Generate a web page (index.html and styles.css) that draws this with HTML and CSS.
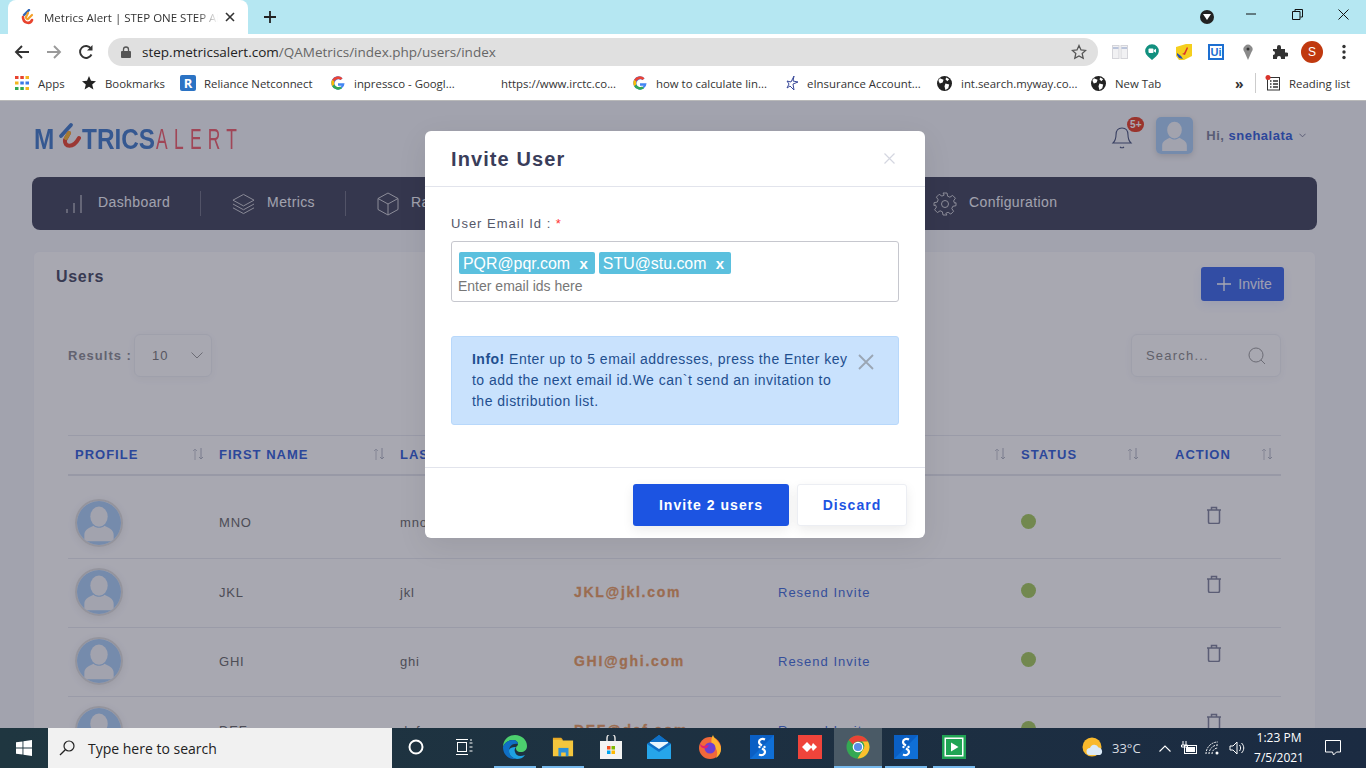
FILE: index.html
```html
<!DOCTYPE html>
<html lang="en">
<head>
    <meta charset="UTF-8">
    <title>Metrics Alert | Users</title>
    <link rel="stylesheet" href="styles.css">
</head>
<body>

<div class="tabstrip">
    <div class="tab">
        <svg class="tab-icon" viewBox="0 0 16 16" width="16" height="16"><path d="M9 1 4 6" stroke="#2f66b8" stroke-width="2.400" stroke-linecap="round" fill="none"/><path d="M3 8c0 6 7 8 9 3" stroke="#e8432e" stroke-width="2.600" stroke-linecap="round" fill="none"/><path d="M8 4 6 8c0 2 2 3 3 1l3-3" stroke="#f3a02a" stroke-width="2.200" stroke-linecap="round" fill="none"/></svg>
        <span class="tab-title">Metrics Alert | STEP ONE STEP AHEAD</span>
        <svg class="tab-close" viewBox="0 0 10 10" width="10" height="10"><path d="M1 1l8 8M9 1 1 9" stroke="#333" stroke-width="1.600"/></svg>
    </div>
    <svg class="new-tab" viewBox="0 0 12 12" width="12" height="12"><path d="M6 0v12M0 6h12" stroke="#222" stroke-width="1.800"/></svg>
    <div class="win-controls">
        <span class="win-profile"><svg viewBox="0 0 8 6" width="8" height="6"><path d="M0 0h8L4 6z" fill="#fff"/></svg></span>
        <span class="win-btn"><svg viewBox="0 0 10 10" width="10" height="10"><path d="M0 5h10" stroke="#111"/></svg></span>
        <span class="win-btn"><svg viewBox="0 0 11 11" width="11" height="11"><path d="M3 2.500V.5h7.500V8H8.500M.5 2.500h7.500v8H.5z" stroke="#111" fill="none"/></svg></span>
        <span class="win-btn"><svg viewBox="0 0 11 11" width="11" height="11"><path d="M.5.500l10 10M10.500.500l-10 10" stroke="#111"/></svg></span>
    </div>
</div>

<div class="toolbar">
    <span class="tool"><svg viewBox="0 0 16 16" width="16" height="16"><path d="M15 8H2M8 2 2 8l6 6" stroke="#333" stroke-width="1.900" fill="none"/></svg></span>
    <span class="tool"><svg viewBox="0 0 16 16" width="16" height="16"><path d="M1 8h13M8 2l6 6-6 6" stroke="#9a9a9a" stroke-width="1.900" fill="none"/></svg></span>
    <span class="tool"><svg viewBox="0 0 16 16" width="16" height="16"><path d="M13.500 10.500A6 6 0 1 1 13 4.500" stroke="#333" stroke-width="1.900" fill="none"/><path d="M14.500 1v5.500H9z" fill="#333"/></svg></span>
    <div class="address">
        <svg viewBox="0 0 10 12" width="10" height="12"><path d="M2.500 5V3.500a2.500 2.500 0 0 1 5 0V5" stroke="#555" stroke-width="1.300" fill="none"/><rect y="5" width="10" height="7" rx="1" fill="#555"/></svg>
        <span class="url"><b>step.metricsalert.com</b>/QAMetrics/index.php/users/index</span>
        <svg class="addr-star" viewBox="0 0 16 16" width="16" height="16"><path d="m8 1.500 2 4.400 4.700.5-3.500 3.200 1 4.700L8 11.900l-4.200 2.400 1-4.700-3.500-3.200L6 5.900z" stroke="#555" stroke-width="1.300" fill="none"/></svg>
    </div>
    <span class="tool"><svg viewBox="0 0 16 14" width="16" height="14"><rect x=".5" y=".5" width="6.500" height="13" fill="#f1f1f3" stroke="#d5d5da"/><rect x="9" y=".5" width="6.500" height="13" fill="#f1f1f3" stroke="#d5d5da"/><path d="M1 3h5.500M9.500 3H15" stroke="#a9b6d4" stroke-width="1.500"/></svg></span>
    <span class="tool"><svg viewBox="0 0 14 16" width="14" height="16"><path d="M7 16 3 12.500A6.800 6.800 0 1 1 11 12.500z" fill="#12907f"/><rect x="3.500" y="4.500" width="5" height="4.500" rx="1" fill="#fff"/><path d="m9 6 2-1.200v3.900L9 7.500z" fill="#fff"/></svg></span>
    <span class="tool"><svg viewBox="0 0 16 16" width="16" height="16"><path d="M0 3 10 0h6v12l-8 4H3L0 12z" fill="#f5cf1e"/><path d="M11 3 8 9l-2 1 3 1 3-7z" fill="#d9342b"/><path d="M1 9l4 3 2 3-4-1-2-3z" fill="#2a4fb0"/></svg></span>
    <span class="tool"><span class="ui-ext">Ui</span></span>
    <span class="tool"><svg viewBox="0 0 10 16" width="10" height="16"><path d="M5 16 1.500 8A4.500 4.500 0 1 1 8.500 8z" fill="#8a8a8a"/><circle cx="5" cy="5" r="1.500" fill="#333"/></svg></span>
    <span class="tool"><svg viewBox="0 0 16 16" width="16" height="16"><path d="M1 5h4V3a2 2 0 0 1 4 0v2h4v3.500h1.500a2 2 0 0 1 0 4H13V15H9v-1a2 2 0 0 0-4 0v1H1v-4a2 2 0 0 0 0-4z" fill="#333"/></svg></span>
    <span class="tool"><span class="chrome-user">S</span></span>
    <span class="tool"><svg viewBox="0 0 4 16" width="4" height="16"><circle cx="2" cy="2.500" r="1.700" fill="#333"/><circle cx="2" cy="8" r="1.700" fill="#333"/><circle cx="2" cy="13.500" r="1.700" fill="#333"/></svg></span>
</div>

<div class="bookmarks">
    <span class="bm"><svg viewBox="0 0 14 14" width="14" height="14"><path d="M0 1.500h3.500M5.300 1.500h3.500" stroke="#e8432e" stroke-width="3"/><path d="M10.500 1.500H14M0 7h3.500" stroke="#f3b51f" stroke-width="3"/><path d="M5.300 7h3.500M10.500 7H14" stroke="#3b78e7" stroke-width="3"/><path d="M0 12.500h3.500M5.300 12.500h3.500" stroke="#31a853" stroke-width="3"/><path d="M10.500 12.500H14" stroke="#f3b51f" stroke-width="3"/></svg>Apps</span>
    <span class="bm"><svg viewBox="0 0 14 14" width="14" height="14"><path d="m7 0 2 4.800 5 .4-3.800 3.300 1.200 5L7 10.800l-4.400 2.700 1.200-5L0 5.200l5-.4z" fill="#222"/></svg>Bookmarks</span>
    <span class="bm"><span class="bm-r">R</span>Reliance Netconnect</span>
    <span class="bm"><svg viewBox="0 0 16 16" width="14" height="14"><use href="#google"/></svg>inpressco - Googl...</span>
    <span class="bm bm-plain">https://www.irctc.co...</span>
    <span class="bm"><svg viewBox="0 0 16 16" width="14" height="14"><use href="#google"/></svg>how to calculate lin...</span>
    <span class="bm bm-tight"><svg viewBox="0 0 16 16" width="16" height="16"><path d="m9 1-1 5 5 1-5 2 1 6-4-4-3 2 2-4-2-3 4 1z" stroke="#3a4a9a" fill="none"/></svg>eInsurance Account...</span>
    <span class="bm"><svg viewBox="0 0 16 16" width="15" height="15"><use href="#globe"/></svg>int.search.myway.co...</span>
    <span class="bm"><svg viewBox="0 0 16 16" width="15" height="15"><use href="#globe"/></svg>New Tab</span>
    <span class="bm-more">»</span>
    <span class="bm-reading">
        <svg viewBox="0 0 16 16" width="16" height="16"><rect x="2.500" y="2.500" width="12" height="12.500" fill="none" stroke="#333"/><path d="M5 6h1.500M8 6h5M5 9h1.500M8 9h5M5 12h1.500M8 12h5" stroke="#333" stroke-width="1.300"/><circle cx="3" cy="2.500" r="2.500" fill="#d9342b"/></svg>
        Reading list
    </span>
</div>

<svg class="defs" width="0" height="0">
    <defs>
        <g id="google"><path d="M15.500 8.200H8v3h4.300A4.500 4.500 0 1 1 11 4.700l2.200-2.200A7.600 7.600 0 1 0 15.500 8.200z" fill="#4285f4"/><path d="M1.300 4.400 3.900 6.300A4.500 4.500 0 0 1 11 4.700l2.200-2.200A7.600 7.600 0 0 0 1.300 4.400z" fill="#ea4335"/><path d="M1.300 4.400a7.600 7.600 0 0 0 0 7.200l2.600-2a4.500 4.500 0 0 1 0-3.300z" fill="#fbbc05"/><path d="M1.300 11.600a7.600 7.600 0 0 0 11.400 2.400L10.300 12a4.500 4.500 0 0 1-6.400-2.400z" fill="#34a853"/></g>
        <g id="globe"><circle cx="8" cy="8" r="8" fill="#222"/><path d="M3 2.500 7 4 6 7 3 8 1.500 5zM9 8l4 1-1 4-3 2-1-4zM10 1.500l3 2-2 2-2-2z" fill="#fff"/></g>
        <g id="person"><rect width="48" height="48" fill="#a9cdf6"/><ellipse cx="24" cy="17" rx="9.500" ry="11" fill="#f4f5f8"/><path d="M8 44V37c0-6 6-8 10-10 3 3 9 3 12 0 4 2 10 4 10 10v7z" fill="#f4f5f8"/></g>
        <g id="sort"><path d="M3 12V1M1 3l2-2 2 2" stroke="#c4c7d0" fill="none"/><path d="M9 0v11M7 9l2 2 2-2" stroke="#b0b4c0" fill="none"/></g>
        <g id="trash"><path d="M1 4h14M5.500 4V1.500h5V4M2.500 4v12a1.500 1.500 0 0 0 1.500 1.500h8a1.500 1.500 0 0 0 1.500-1.500V4" stroke="#7d8199" stroke-width="1.500" fill="none"/></g>
        <g id="snap"><rect width="24" height="24" fill="#0f6fd6"/><path d="M0 0h24L0 24z" fill="#0a5fc4"/><path d="M15 4.500c-3-1.500-6 0-6 2.500 0 2 2 3 3 3.500M9 19.500c3 1.500 6 0 6-2.500 0-2-2-3-3-3.500" stroke="#fff" stroke-width="2.200" fill="none"/><circle cx="9.500" cy="12" r="1.200" fill="#fff"/><circle cx="14.500" cy="12" r="1.200" fill="#fff"/></g>
    </defs>
</svg>

<div class="page">
    <header class="site-head">
        <div class="logo">
            <span class="logo-m">M</span><svg class="logo-mark" viewBox="0 0 24 28" width="24" height="28"><path d="M14 3 4 14" stroke="#3f78c8" stroke-width="3.800" stroke-linecap="round" fill="none"/><path d="M12 11 8 18c-1 7 8 9 14-2" stroke="#e8432e" stroke-width="4" stroke-linecap="round" fill="none"/><path d="M12 11 9 16" stroke="#f7b32b" stroke-width="4" stroke-linecap="round" fill="none"/></svg><span class="logo-trics">TRICS</span><span class="logo-light">ALERT</span>
        </div>
        <div class="user-box">
            <span class="bell">
                <svg viewBox="0 0 24 26" width="24" height="26"><path d="M12 5c-4 0-6 3-6 7 0 4-1 6-3 8h18c-2-2-3-4-3-8 0-4-2-7-6-7zM10 24c1 1 3 1 4 0" stroke="#44507a" stroke-width="1.100" fill="none"/></svg>
                <span class="badge">5+</span>
            </span>
            <svg class="top-avatar" viewBox="0 0 48 48" width="37" height="37"><use href="#person"/></svg>
            <span class="hi">Hi, <b>snehalata</b></span>
            <svg viewBox="0 0 8 5" width="7" height="5"><path d="m.5.500 3.500 3.500L7.500.500" stroke="#6d7491" fill="none"/></svg>
        </div>
    </header>

    <nav class="main-nav">
        <a class="nav-item">
            <svg viewBox="0 0 20 20" width="20" height="20"><path d="M1 19v-4M8 19V9M15 19V1" stroke="#fff" stroke-width="1.100" fill="none"/></svg>
            Dashboard
        </a>
        <a class="nav-item">
            <svg viewBox="0 0 24 24" width="23" height="24"><path d="m12 2 11 6-11 6L1 8zM1 12l11 6 11-6M1 16l11 6 11-6" stroke="#fff" stroke-width="1" fill="none"/></svg>
            Metrics
        </a>
        <a class="nav-item">
            <svg viewBox="0 0 22 24" width="22" height="24"><path d="m11 1 10 5.500v11L11 23 1 17.500v-11zM1 6.500 11 12l10-5.500M11 12v11" stroke="#fff" stroke-width="1" fill="none"/></svg>
            Raw Data
        </a>
        <a class="nav-item nav-item-last">
            <svg viewBox="0 0 24 24" width="24" height="24"><circle cx="12" cy="12" r="3.500" stroke="#fff" fill="none"/><path d="M10 1h4l.6 3.200 2.300 1 2.700-1.800 2.800 2.800-1.800 2.700 1 2.300L23 10.700v3l-3.200.6-1 2.300 1.800 2.700-2.800 2.800-2.700-1.800-2.300 1L14 23h-4l-.6-3.200-2.300-1-2.700 1.800-2.800-2.800 1.800-2.700-1-2.300L1 13.700v-3l3.200-.6 1-2.300-1.800-2.700 2.800-2.800 2.700 1.800 2.300-1z" stroke="#fff" stroke-width="1" fill="none"/></svg>
            Configuration
        </a>
    </nav>

    <section class="card">
        <div class="card-head">
            <h2>Users</h2>
            <button class="invite-btn"><svg viewBox="0 0 14 14" width="14" height="14"><path d="M7 0v14M0 7h14" stroke="#fff" stroke-width="1.300"/></svg>Invite</button>
        </div>

        <div class="controls">
            <label class="results">Results :
                <span class="select">10<svg viewBox="0 0 12 7" width="12" height="7"><path d="m.5.500 5.500 5.500L11.500.500" stroke="#999" fill="none"/></svg></span>
            </label>
            <div class="search">Search...<svg viewBox="0 0 18 18" width="18" height="18"><circle cx="8" cy="8" r="7" stroke="#999" fill="none"/><path d="m13 13 4 4" stroke="#999"/></svg></div>
        </div>

        <table class="users">
            <colgroup>
                <col class="c1"><col class="c2"><col class="c3"><col class="c4"><col class="c5"><col class="c6"><col class="c7">
            </colgroup>
            <thead>
                <tr>
                    <th>PROFILE<svg class="sort" viewBox="0 0 12 12" width="12" height="12"><use href="#sort"/></svg></th>
                    <th>FIRST NAME<svg class="sort" viewBox="0 0 12 12" width="12" height="12"><use href="#sort"/></svg></th>
                    <th>LAST NAME<svg class="sort" viewBox="0 0 12 12" width="12" height="12"><use href="#sort"/></svg></th>
                    <th>EMAIL<svg class="sort" viewBox="0 0 12 12" width="12" height="12"><use href="#sort"/></svg></th>
                    <th>INVITE<svg class="sort" viewBox="0 0 12 12" width="12" height="12"><use href="#sort"/></svg></th>
                    <th>STATUS<svg class="sort" viewBox="0 0 12 12" width="12" height="12"><use href="#sort"/></svg></th>
                    <th class="th-action">ACTION<svg class="sort" viewBox="0 0 12 12" width="12" height="12"><use href="#sort"/></svg></th>
                </tr>
            </thead>
            <tbody>
                <tr class="gap"><td colspan="7"></td></tr>
                <tr>
                    <td><svg class="avatar" viewBox="0 0 48 48" width="48" height="48"><use href="#person"/></svg></td>
                    <td>MNO</td><td>mno</td><td class="email">MNO@mno.com</td><td class="resend">Resend Invite</td>
                    <td><span class="dot"></span></td>
                    <td class="action"><svg viewBox="0 0 16 18" width="16" height="18"><use href="#trash"/></svg></td>
                </tr>
                <tr>
                    <td><svg class="avatar" viewBox="0 0 48 48" width="48" height="48"><use href="#person"/></svg></td>
                    <td>JKL</td><td>jkl</td><td class="email">JKL@jkl.com</td><td class="resend">Resend Invite</td>
                    <td><span class="dot"></span></td>
                    <td class="action"><svg viewBox="0 0 16 18" width="16" height="18"><use href="#trash"/></svg></td>
                </tr>
                <tr>
                    <td><svg class="avatar" viewBox="0 0 48 48" width="48" height="48"><use href="#person"/></svg></td>
                    <td>GHI</td><td>ghi</td><td class="email">GHI@ghi.com</td><td class="resend">Resend Invite</td>
                    <td><span class="dot"></span></td>
                    <td class="action"><svg viewBox="0 0 16 18" width="16" height="18"><use href="#trash"/></svg></td>
                </tr>
                <tr>
                    <td><svg class="avatar" viewBox="0 0 48 48" width="48" height="48"><use href="#person"/></svg></td>
                    <td>DEF</td><td>def</td><td class="email">DEF@def.com</td><td class="resend">Resend Invite</td>
                    <td><span class="dot"></span></td>
                    <td class="action"><svg viewBox="0 0 16 18" width="16" height="18"><use href="#trash"/></svg></td>
                </tr>
            </tbody>
        </table>
    </section>

    <div class="backdrop"></div>

    <div class="modal">
        <div class="modal-head">
            <h3>Invite User</h3>
            <svg viewBox="0 0 11 11" width="11" height="11"><path d="m.5.500 10 10M10.500.500l-10 10" stroke="#d4d6e0" stroke-width="1.200"/></svg>
        </div>
        <div class="modal-body">
            <label class="field-label">User Email Id : <span class="req">*</span></label>
            <div class="tag-input">
                <div class="tags">
                    <span class="tag">PQR@pqr.com <i>x</i></span>
                    <span class="tag">STU@stu.com <i>x</i></span>
                </div>
                <div class="placeholder">Enter email ids here</div>
            </div>
            <div class="alert">
                <p><b>Info!</b> Enter up to 5 email addresses, press the Enter key to add the next email id.We can`t send an invitation to the distribution list.</p>
                <svg viewBox="0 0 16 16" width="16" height="16"><path d="m1 1 14 14M15 1 1 15" stroke="#9aa6b4" stroke-width="1.800"/></svg>
            </div>
        </div>
        <div class="modal-foot">
            <button class="btn-primary">Invite 2 users</button>
            <button class="btn-light">Discard</button>
        </div>
    </div>
</div>

<footer class="taskbar">
    <span class="start"><svg viewBox="0 0 16 16" width="16" height="16"><path d="M0 2.300 6.500 1.400v6.100H0zM7.400 1.300 16 0v7.500H7.400zM0 8.500h6.500v6.100L0 13.700zM7.400 8.500H16V16l-8.600-1.300z" fill="#fff"/></svg></span>
    <div class="task-search">
        <svg viewBox="0 0 16 16" width="16" height="16"><circle cx="10" cy="6" r="5" stroke="#222" fill="none" stroke-width="1.200"/><path d="M6.300 9.700 1 15" stroke="#222" stroke-width="1.300"/></svg>
        Type here to search
    </div>
    <span class="task"><svg viewBox="0 0 16 16" width="16" height="16"><circle cx="8" cy="8" r="6.500" stroke="#fff" stroke-width="2" fill="none"/></svg></span>
    <span class="task"><svg viewBox="0 0 18 16" width="18" height="16"><rect x="2.500" y="3.500" width="9" height="9" stroke="#fff" fill="none"/><path d="M1 .500h12M1 15.500h12M14.500 4h3M14.500 8h3M14.500 12h3M15 1h2" stroke="#fff"/></svg></span>
    <span class="task task-open task-edge"><svg viewBox="0 0 24 24" width="24" height="24"><path d="M12 0c7 0 12 5 12 11 0 4-3 6-6 6-4 0-5-2-5-4 0-2 2-2 2-4 0-2-2-4-5-4C5 5 1 8 0 12 0 5 5 0 12 0z" fill="#4ccf6e"/><path d="M0 12c1-4 5-7 10-7 3 0 5 2 5 4-6-1-9 3-9 7 0 4 3 7 8 8C6 25 0 20 0 12z" fill="#0f6fc5"/><path d="M6 16c0 4 3 7 8 8 3 0 6-1 8-4-5 2-9 1-10-3-1-2 0-4 1-5-4 0-7 1-7 4z" fill="#1ea2e3"/></svg></span>
    <span class="task task-open"><svg viewBox="0 0 24 24" width="24" height="22"><path d="M1 3h9l2 2h11v17H1z" fill="#f4c63d"/><path d="M1 2h9l2 2H1z" fill="#e8a825"/><rect x="7" y="13" width="11" height="9" fill="#2a8fd8"/><rect x="10" y="18" width="5" height="4" fill="#f4c63d"/></svg></span>
    <span class="task"><svg viewBox="0 0 22 24" width="22" height="24"><path d="M7 6V3a4 4 0 0 1 8 0v3" stroke="#ddd" fill="none" stroke-width="1.500"/><rect y="6" width="22" height="18" fill="#f3f3f3"/><path d="M7 11h3.500v3.500H7z" fill="#f25022"/><path d="M11.500 11H15v3.500h-3.500z" fill="#7fba00"/><path d="M7 15.500h3.500V19H7z" fill="#00a4ef"/><path d="M11.500 15.500H15V19h-3.500z" fill="#ffb900"/></svg></span>
    <span class="task"><svg viewBox="0 0 24 24" width="24" height="24"><path d="M12 0 24 9v15H0V9z" fill="#0f80d0"/><path d="M0 9h24v15H0z" fill="#26a5ea"/><path d="m0 9 12 8 12-8-12-9z" fill="#0f6fc5"/><path d="m3 8 9 6 9-6v-1H3z" fill="#eaf6fd"/></svg></span>
    <span class="task task-fox"><svg viewBox="0 0 24 24" width="24" height="24"><circle cx="12" cy="13" r="11" fill="#f0683a"/><path d="M15 0c1 4 8 7 8 14 0 4-2 7-5 9 3-6 0-11-4-13-1-4-1-7 1-10z" fill="#ffb52e"/><circle cx="12" cy="13" r="5.500" fill="#6d3fd1"/><path d="M2 8c2 5 6 2 9 2l-2 3c-3 1-7 0-7-5z" fill="#e2226f"/></svg></span>
    <span class="task task-gap"><svg viewBox="0 0 24 24" width="24" height="24"><use href="#snap"/></svg></span>
    <span class="task"><svg viewBox="0 0 24 24" width="24" height="24"><rect width="24" height="24" fill="#ef443b"/><path d="m9 7 5 5-5 5-5-5zM15 8l4 4-4 4-2-4z" fill="#fff"/></svg></span>
    <span class="task task-active task-open"><svg viewBox="0 0 24 24" width="24" height="24"><circle cx="12" cy="12" r="11.500" fill="#34a853"/><path d="M12 .500A11.500 11.500 0 0 1 22 6.500H12a5.500 5.500 0 0 0-5 3L2.800 5A11.500 11.500 0 0 1 12 .500z" fill="#ea4335"/><path d="M22 6.500a11.500 11.500 0 0 1-10.500 17L16.700 15A5.500 5.500 0 0 0 16 6.500z" fill="#fbc02d"/><circle cx="12" cy="12" r="5.300" fill="#fff"/><circle cx="12" cy="12" r="4.100" fill="#5a8ee8"/></svg></span>
    <span class="task task-open"><svg viewBox="0 0 24 24" width="24" height="24"><use href="#snap"/></svg></span>
    <span class="task task-open"><svg viewBox="0 0 24 24" width="24" height="24"><rect width="24" height="24" fill="#20a454"/><rect x="2.500" y="2.500" width="19" height="19" fill="#fff"/><rect x="4" y="4" width="16" height="16" fill="#20a454"/><path d="M9 7.500 16.500 12 9 16.500z" fill="#fff"/></svg></span>

    <div class="tray">
        <span class="tray-weather"><svg viewBox="0 0 22 22" width="22" height="22"><circle cx="10" cy="10" r="9.500" fill="#f9b92c"/><path d="M8 18a3.500 3.500 0 0 1 0-7 4.500 4.500 0 0 1 8.500-.5A4 4 0 0 1 18 18z" fill="#dbeaf7"/></svg></span>
        <span class="tray-temp">33°C</span>
        <span class="tray-icon"><svg viewBox="0 0 12 7" width="12" height="7"><path d="m.5 6.500 5.500-5.500 5.500 5.500" stroke="#fff" fill="none" stroke-width="1.100"/></svg></span>
        <span class="tray-icon"><svg viewBox="0 0 16 14" width="16" height="14"><rect x="3.500" y="4.500" width="12" height="8" stroke="#fff" fill="none"/><rect x="5" y="6" width="9" height="5" fill="#fff"/><path d="M2 0v4M5 0v4M.5 4h6v2H.5z" stroke="#fff" fill="none"/></svg></span>
        <span class="tray-icon"><svg viewBox="0 0 16 14" width="16" height="14"><path d="M1 13A12 12 0 0 1 13 1M4 13a9 9 0 0 1 9-9M7 13a6 6 0 0 1 6-6" stroke="#fff" fill="none" stroke-dasharray="2 1"/><circle cx="12" cy="12" r="1.500" fill="#fff"/></svg></span>
        <span class="tray-icon"><svg viewBox="0 0 16 16" width="16" height="16"><path d="M1 6h3l4-4v12l-4-4H1zM10.500 5c1.500 2 1.500 4 0 6M12.500 3c3 3 3 7 0 10" stroke="#fff" fill="none"/></svg></span>
        <span class="clock">1:23 PM<br>7/5/2021</span>
        <span class="tray-notify"><svg viewBox="0 0 16 16" width="16" height="16"><path d="M.5.500h15v11.500h-4l-3 3-1-3H.5z" stroke="#fff" fill="none"/></svg></span>
    </div>
</footer>

</body>
</html>
```

FILE: styles.css
```css
* {
    box-sizing: border-box;
}
html, body {
    height: 100%;
}
body {
    font-family: "Liberation Sans", Arial, sans-serif;
    margin: 0;
    height: 768px;
    display: flex;
    flex-direction: column;
    overflow: hidden;
    background-color: #f4f5f8;
}
svg {
    flex-shrink: 0;
    display: block;
}
.defs {
    position: absolute;
}

/* browser chrome */
.tabstrip {
    height: 34px;
    background-color: #b5e7f2;
    display: flex;
    align-items: center;
    padding-left: 8px;
}
.tab {
    width: 240px;
    height: 34px;
    background-color: #fff;
    border-radius: 8px 8px 0 0;
    display: flex;
    align-items: center;
    padding-left: 12px;
}
.tab-title {
    font-family: "Open Sans", sans-serif;
    font-size: 11.500px;
    color: #333;
    width: 174px;
    margin-left: 8px;
    white-space: nowrap;
    overflow: hidden;
    -webkit-mask-image: linear-gradient(90deg, #000 88%, transparent);
    mask-image: linear-gradient(90deg, #000 88%, transparent);
}
.tab-close {
    margin-left: 7px;
}
.new-tab {
    margin-left: 16px;
}
.win-controls {
    margin-left: auto;
    display: flex;
    align-items: center;
    height: 100%;
}
.win-profile {
    width: 14px;
    height: 14px;
    border-radius: 50%;
    background-color: #222;
    display: flex;
    align-items: center;
    justify-content: center;
    margin-right: 14px;
}
.win-btn {
    width: 46px;
    display: flex;
    justify-content: center;
    margin-top: -6px;
}
.toolbar {
    height: 34px;
    padding: 2px 0 0 6px;
    background-color: #fff;
    display: flex;
    align-items: center;
}
.tool {
    width: 32px;
    height: 28px;
    display: flex;
    align-items: center;
    justify-content: center;
}
.address {
    width: 990px;
    height: 28px;
    margin: 0 6px;
    background-color: #e0e0e0;
    border-radius: 14px;
    display: flex;
    align-items: center;
    padding-left: 13px;
}
.url {
    font-family: "Open Sans", sans-serif;
    font-size: 13.500px;
    color: #666;
    margin-left: 11px;
}
.url b {
    font-weight: normal;
    color: #222;
}
.addr-star {
    margin-left: auto;
    margin-right: 11px;
}
.ui-ext {
    width: 16px;
    height: 16px;
    border: 2px solid #1d6fd1;
    color: #1d6fd1;
    font-size: 11px;
    font-weight: bold;
    line-height: 12px;
    text-align: center;
}
.chrome-user {
    width: 22px;
    height: 22px;
    border-radius: 50%;
    background-color: #c0390f;
    color: #fff;
    font-size: 12px;
    line-height: 22px;
    text-align: center;
}
.bookmarks {
    height: 33px;
    flex-shrink: 0;
    padding: 0 0 2px 15px;
    background-color: #fff;
    border-bottom: 1px solid #b9b9b9;
    display: grid;
    grid-template-columns: 67px 98px 151px 148px 154px 152px 152px 154px 144px 20px 1fr;
    align-items: center;
    font-family: "Open Sans", sans-serif;
    font-size: 11.400px;
    color: #333;
}
.bm {
    display: flex;
    align-items: center;
    gap: 9px;
    white-space: nowrap;
}
.bm-tight {
    gap: 6px;
}
.bm-plain {
    padding-left: 22px;
}
.bm-r {
    width: 16px;
    height: 16px;
    background-color: #2b73c4;
    border-radius: 2px;
    color: #fff;
    font-weight: bold;
    font-size: 13px;
    line-height: 16px;
    text-align: center;
    margin-right: -1px;
}
.bm-more {
    font-size: 14px;
    font-weight: bold;
}
.bm-reading {
    display: flex;
    align-items: center;
    gap: 8px;
    border-left: 1px solid #ccc;
    padding-left: 9px;
    height: 20px;
}

/* site */
.page {
    flex: 1;
    position: relative;
    overflow: hidden;
    padding: 0 49px 0 32px;
    min-height: 0;
}
.backdrop {
    position: absolute;
    inset: 0;
    background-color: rgba(40, 40, 62, .4);
}
.site-head {
    height: 76px;
    display: flex;
    align-items: center;
    justify-content: space-between;
    padding: 0 11px 0 2px;
}
.logo {
    display: flex;
    align-items: center;
    font-size: 29px;
    line-height: 30px;
    margin-top: -1px;
}
.logo-m,
.logo-trics {
    display: inline-block;
    color: #3f78c8;
    font-weight: bold;
    transform: scaleX(.84);
    transform-origin: left;
}
.logo-m {
    margin-right: -1px;
}
.logo-mark {
    margin: -6px 1px 0 0;
}
.logo-trics {
    margin-right: -16px;
}
.logo-light {
    display: inline-block;
    color: #f05a68;
    letter-spacing: 10.500px;
    margin-left: 3px;
    transform: scaleX(.6);
    transform-origin: left;
}
.user-box {
    align-self: flex-start;
    display: flex;
    align-items: center;
    margin-top: 16px;
}
.bell {
    position: relative;
    margin-right: 22px;
}
.badge {
    position: absolute;
    top: -6px;
    right: -10px;
    width: 17px;
    height: 15px;
    border-radius: 8px;
    background-color: #e63d22;
    color: #fff;
    font-size: 10px;
    font-weight: bold;
    line-height: 15px;
    text-align: center;
}
.top-avatar {
    border-radius: 5px;
    box-shadow: 0 2px 6px rgba(0, 0, 0, .15);
}
.hi {
    font-size: 13px;
    font-weight: bold;
    letter-spacing: .5px;
    color: #7b8099;
    margin: 0 6px 0 13px;
}
.hi b {
    color: #2f5cd8;
}
.main-nav {
    height: 53px;
    background-color: #3f4259;
    border-radius: 8px;
    display: flex;
    align-items: center;
    padding-left: 34px;
}
.nav-item {
    display: flex;
    align-items: center;
    gap: 12px;
    height: 25px;
    padding: 0 30px 4px 0;
    margin-right: 31px;
    border-right: 1px solid rgba(255, 255, 255, .25);
    color: #f2f3f8;
    font-size: 14px;
    letter-spacing: .4px;
}
.nav-item svg {
    opacity: .75;
    margin-top: 4px;
}
.nav-item-last {
    margin: 0 0 0 auto;
    width: 384px;
    border-right: 0;
}
.card {
    margin: 21px 1px 0;
    height: 600px;
    background-color: #fdfdfe;
    border: 1px solid #f2f3f8;
    border-radius: 6px;
    padding: 15px 31px 0 22px;
}
.card-head {
    display: flex;
    justify-content: space-between;
    align-items: flex-start;
}
.card-head h2 {
    margin: 0;
    font-size: 16px;
    letter-spacing: .7px;
    color: #44475f;
    line-height: 20px;
}
.invite-btn {
    width: 83px;
    height: 34px;
    padding: 0 0 0 4px;
    background-color: #3a67e8;
    border: 0;
    border-radius: 3px;
    color: #eef;
    font-family: inherit;
    font-size: 14px;
    display: flex;
    align-items: center;
    justify-content: center;
    gap: 7px;
    box-shadow: 0 4px 10px rgba(58, 103, 232, .1);
}
.controls {
    margin: 33px 3px 0 12px;
    display: flex;
    justify-content: space-between;
}
.results {
    display: flex;
    align-items: center;
    font-size: 13px;
    font-weight: bold;
    letter-spacing: 1px;
    color: #8a8a92;
}
.select {
    width: 78px;
    height: 43px;
    margin-left: 2px;
    border: 1px solid #eef0f4;
    border-radius: 6px;
    display: flex;
    align-items: center;
    justify-content: space-between;
    padding: 0 8px 0 17px;
    font-weight: normal;
    color: #777;
    box-shadow: 0 2px 8px rgba(0, 0, 0, .04);
}
.search {
    width: 150px;
    height: 43px;
    border: 1px solid #eef0f4;
    border-radius: 6px;
    display: flex;
    align-items: center;
    justify-content: space-between;
    padding: 0 14px;
    font-size: 13px;
    letter-spacing: 1.200px;
    color: #888;
    box-shadow: 0 2px 8px rgba(0, 0, 0, .04);
}
.users {
    margin: 58px 3px 0 12px;
    width: 1213px;
    table-layout: fixed;
    border-collapse: collapse;
}
.c1 { width: 144px; }
.c2 { width: 181px; }
.c3 { width: 174px; }
.c4 { width: 204px; }
.c5 { width: 243px; }
.c6 { width: 133px; }
.c7 { width: 134px; }
.users th {
    position: relative;
    height: 39px;
    padding: 0 7px;
    border-top: 1px solid #e6e8ef;
    border-bottom: 2px solid #e3e5ec;
    text-align: left;
    color: #2f5cd8;
    font-size: 13px;
    letter-spacing: 1px;
}
.users .th-action {
    padding-left: 28px;
}
.sort {
    position: absolute;
    right: 8px;
    top: 12px;
}
.users td {
    height: 69px;
    padding: 0 7px 2px;
    border-bottom: 1px solid #e6e8ef;
    font-size: 13px;
    letter-spacing: .8px;
    color: #666;
}
.users .gap td {
    height: 15px;
    padding: 0;
    border: 0;
}
.avatar {
    border-radius: 50%;
    border: 2px solid #ddd;
    box-shadow: 0 2px 8px rgba(0, 0, 0, .08);
}
.users .email {
    font-size: 14px;
    font-weight: bold;
    letter-spacing: 1.700px;
    color: #e89a5c;
    -webkit-text-stroke: .3px #e89a5c;
}
.users .resend {
    color: #3f6ad8;
    letter-spacing: 1px;
}
.dot {
    display: block;
    width: 15px;
    height: 15px;
    margin-top: -3px;
    border-radius: 50%;
    background-color: #a3c95a;
}
.action svg {
    margin: -16px 0 0 52px;
}

/* invite modal */
.modal {
    position: absolute;
    top: 30px;
    left: 425px;
    width: 500px;
    height: 407px;
    background-color: #fff;
    border-radius: 6px;
    display: flex;
    flex-direction: column;
    box-shadow: 0 8px 30px rgba(0, 0, 0, .08);
}
.modal-head {
    height: 56px;
    flex-shrink: 0;
    padding: 1px 30px 0 26px;
    border-bottom: 1px solid #e2e4ec;
    display: flex;
    align-items: center;
    justify-content: space-between;
}
.modal-head h3 {
    margin: 0;
    font-size: 20px;
    letter-spacing: 1.100px;
    color: #3a3d5a;
}
.modal-head svg {
    margin-top: -2px;
}
.modal-body {
    flex: 1;
    padding: 29px 26px 0;
}
.field-label {
    display: block;
    font-size: 13px;
    line-height: 15px;
    letter-spacing: 1px;
    color: #555868;
}
.req {
    color: #f33;
}
.tag-input {
    height: 61px;
    margin-top: 10px;
    border: 1px solid #c6c7ce;
    border-radius: 3px;
    padding: 10px 6px 0 6px;
}
.tags {
    display: flex;
    gap: 4px;
    padding-left: 1px;
}
.tag {
    height: 22px;
    padding: 0 7px 0 4px;
    background-color: #5bc0de;
    border-radius: 2px;
    color: #fff;
    font-size: 15.900px;
    line-height: 23px;
    white-space: pre;
}
.tag i {
    font-style: normal;
    font-weight: bold;
    font-size: 15px;
    margin-left: 5px;
}
.placeholder {
    margin-top: 3px;
    font-size: 14px;
    line-height: 18px;
    color: #777;
}
.alert {
    height: 89px;
    margin-top: 34px;
    padding: 12px 10px 0 20px;
    background-color: #c9e2fd;
    border: 1px solid #b8d8fb;
    border-radius: 3px;
    display: flex;
    justify-content: space-between;
    align-items: flex-start;
    font-size: 14px;
    line-height: 21px;
    letter-spacing: .48px;
    color: #1f4f8f;
}
.alert p {
    margin: 0;
    width: 384px;
}
.alert svg {
    margin: 5px 14px 0 0;
}
.modal-foot {
    height: 71px;
    flex-shrink: 0;
    border-top: 1px solid #e2e4ec;
    display: flex;
    justify-content: flex-end;
    gap: 8px;
    padding: 16px 18px 0 0;
}
.modal-foot button {
    height: 42px;
    border-radius: 3px;
    font-family: inherit;
    font-size: 14px;
    font-weight: bold;
    letter-spacing: 1.050px;
    box-shadow: 0 4px 12px rgba(0, 0, 0, .08);
}
.btn-primary {
    width: 156px;
    background-color: #1c54e2;
    color: #fff;
    border: 0;
}
.btn-light {
    width: 110px;
    background-color: #fff;
    color: #1c54e2;
    border: 1px solid #eceef3;
}

/* windows taskbar */
.taskbar {
    height: 40px;
    flex-shrink: 0;
    position: relative;
    background: linear-gradient(90deg, #1f3640, #1b2b42);
    display: flex;
    align-items: center;
}
.start {
    width: 48px;
    display: flex;
    justify-content: center;
}
.task-search {
    width: 344px;
    height: 40px;
    background-color: #f1f1f1;
    display: flex;
    align-items: center;
    gap: 13px;
    padding-left: 11px;
    font-family: "Open Sans", sans-serif;
    font-size: 14px;
    color: #222;
}
.task {
    width: 48px;
    height: 40px;
    display: flex;
    align-items: center;
    justify-content: center;
    border-bottom: 2px solid transparent;
}
.task-open {
    border-image: linear-gradient(90deg, transparent 8%, #76b9ed 8%, #76b9ed 92%, transparent 92%) 1;
}
.task-edge {
    margin-left: 3px;
}
.task-fox {
    margin-left: 3px;
}
.task-gap {
    margin-left: 4px;
}
.task-active {
    background-color: #4a5a66;
    border-image: none;
    border-bottom-color: #76b9ed;
}
.tray {
    margin-left: auto;
    display: flex;
    align-items: center;
    height: 40px;
    color: #fff;
}
.tray-weather {
    margin-right: 8px;
}
.tray-temp {
    width: 41px;
    font-family: "Open Sans", sans-serif;
    font-size: 13px;
    color: #d8dde2;
}
.tray-icon {
    width: 24px;
    display: flex;
    justify-content: center;
}
.clock {
    width: 60px;
    font-family: "Open Sans", sans-serif;
    font-size: 12px;
    line-height: 20px;
    text-align: center;
}
.tray-notify {
    width: 57px;
    display: flex;
    justify-content: center;
    padding-right: 9px;
}
```
